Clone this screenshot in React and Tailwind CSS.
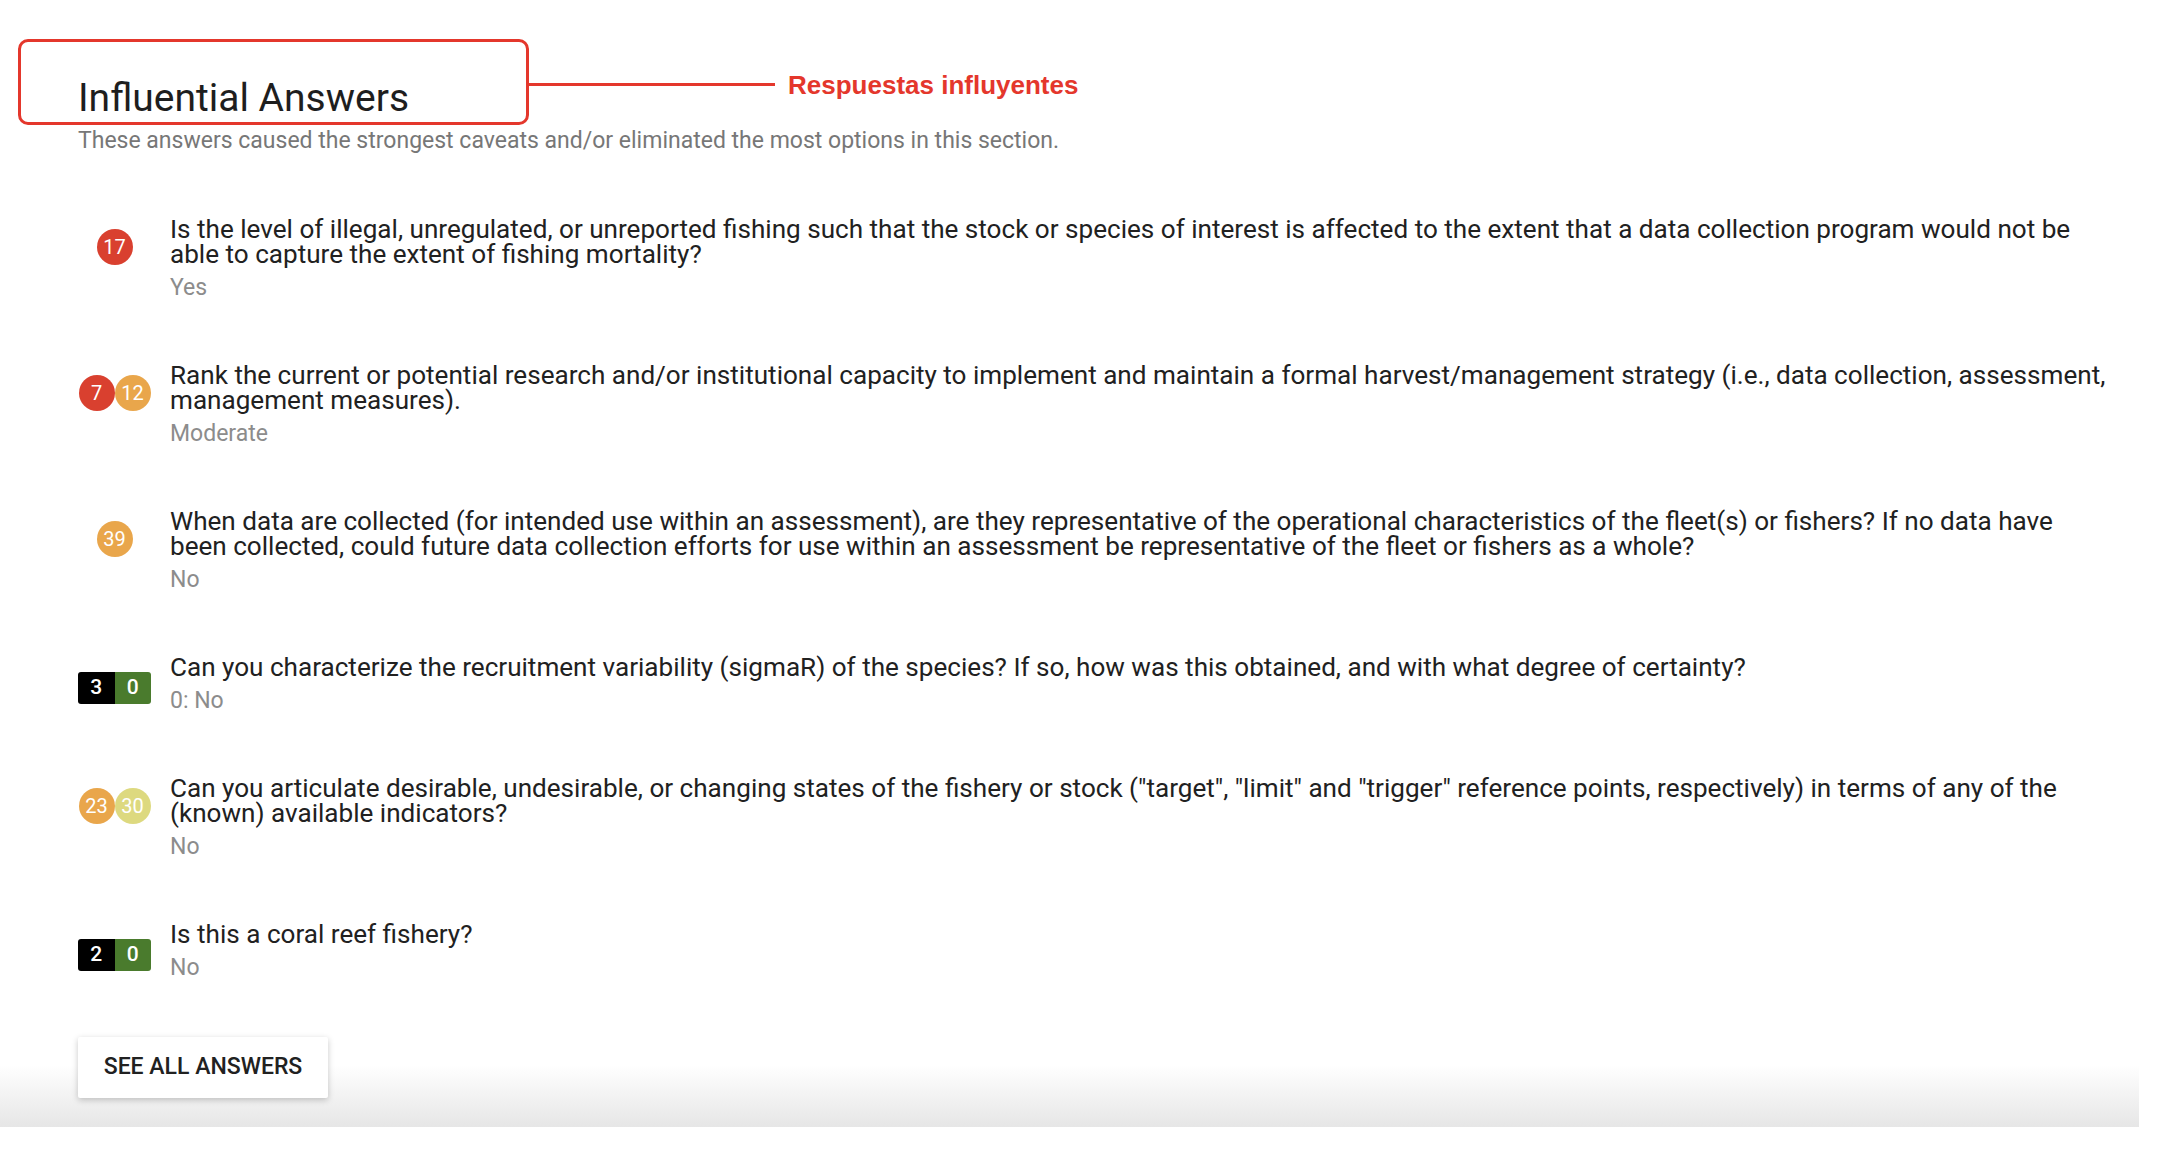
import React from 'react';

const COLORS = {
  red: 'bg-[#d9402f]',
  orange: 'bg-[#e9a64b]',
  yellow: 'bg-[#ddd97f]',
};

const answers = [
  {
    badge: { type: 'circles', items: [{ n: 17, c: 'red' }] },
    question:
      'Is the level of illegal, unregulated, or unreported fishing such that the stock or species of interest is affected to the extent that a data collection program would not be able to capture the extent of fishing mortality?',
    answer: 'Yes',
  },
  {
    badge: { type: 'circles', items: [{ n: 7, c: 'red' }, { n: 12, c: 'orange' }] },
    question:
      'Rank the current or potential research and/or institutional capacity to implement and maintain a formal harvest/management strategy (i.e., data collection, assessment, management measures).',
    answer: 'Moderate',
  },
  {
    badge: { type: 'circles', items: [{ n: 39, c: 'orange' }] },
    question:
      'When data are collected (for intended use within an assessment), are they representative of the operational characteristics of the fleet(s) or fishers? If no data have been collected, could future data collection efforts for use within an assessment be representative of the fleet or fishers as a whole?',
    answer: 'No',
  },
  {
    badge: { type: 'score', left: 3, right: 0 },
    question:
      'Can you characterize the recruitment variability (sigmaR) of the species? If so, how was this obtained, and with what degree of certainty?',
    answer: '0: No',
  },
  {
    badge: { type: 'circles', items: [{ n: 23, c: 'orange' }, { n: 30, c: 'yellow' }] },
    question:
      'Can you articulate desirable, undesirable, or changing states of the fishery or stock ("target", "limit" and "trigger" reference points, respectively) in terms of any of the (known) available indicators?',
    answer: 'No',
  },
  {
    badge: { type: 'score', left: 2, right: 0 },
    question: 'Is this a coral reef fishery?',
    answer: 'No',
  },
];

const Badge = ({ badge }) => {
  if (badge.type === 'score') {
    return (
      <div className="mt-[5px] flex h-[32px] w-[73px] overflow-hidden rounded-[3px] text-[21px] font-medium text-white">
        <div className="flex flex-1 items-center justify-center bg-black">{badge.left}</div>
        <div className="flex flex-1 items-center justify-center bg-[#4a7b2d]">{badge.right}</div>
      </div>
    );
  }
  return (
    <div className="flex justify-center">
      {badge.items.map((b, i) => (
        <div
          key={i}
          className={`flex h-[36px] w-[36px] items-center justify-center rounded-full text-[20px] text-white ${COLORS[b.c]}`}
        >
          {b.n}
        </div>
      ))}
    </div>
  );
};

const AnswerRow = ({ item }) => (
  <div className="flex items-start gap-[19px]">
    <div className="mt-[12px] flex w-[73px] shrink-0 justify-center">
      <Badge badge={item.badge} />
    </div>
    <div className="flex-1">
      <p className="text-[26.1px] leading-[25px] text-[#212121]">{item.question}</p>
      <p className="mt-[8px] text-[23px] leading-[25px] text-[#8c8c8c]">{item.answer}</p>
    </div>
  </div>
);

const App = () => {
  return (
    <div className="relative min-h-screen bg-white font-[Roboto,sans-serif]">
      <div className="relative w-[2139px] bg-[linear-gradient(to_bottom,#ffffff_calc(100%-62px),#e6e6e6)] pb-[29px] pl-[78px] pr-[24px] pt-[75px]">
        <h2 className="text-[39px] leading-[46px] text-[#1e1e1e]">Influential Answers</h2>
        <p className="mt-[7px] text-[23px] leading-[25px] text-[#777777]">
          These answers caused the strongest caveats and/or eliminated the most options in this section.
        </p>

        <div className="mt-[64px] flex flex-col gap-[63px]">
          {answers.map((item, i) => (
            <AnswerRow key={i} item={item} />
          ))}
        </div>

        <button className="mt-[57px] h-[61px] w-[250px] rounded-[2px] bg-white text-[23px] font-medium text-[#212121] shadow-[0_2px_6px_rgba(0,0,0,0.22)]">
          SEE ALL ANSWERS
        </button>
      </div>

      {/* annotation overlay */}
      <div className="absolute left-[18px] top-[39px] h-[86px] w-[511px] rounded-[10px] border-[3px] border-[#e4372c]" />
      <div className="absolute left-[529px] top-[83px] h-[3px] w-[246px] bg-[#e4372c]" />
      <div className="absolute left-[788px] top-[69px] font-['Liberation_Sans',Arial,sans-serif] text-[26px] font-bold leading-[32px] text-[#e4372c]">
        Respuestas influyentes
      </div>
    </div>
  );
};

export default App;
